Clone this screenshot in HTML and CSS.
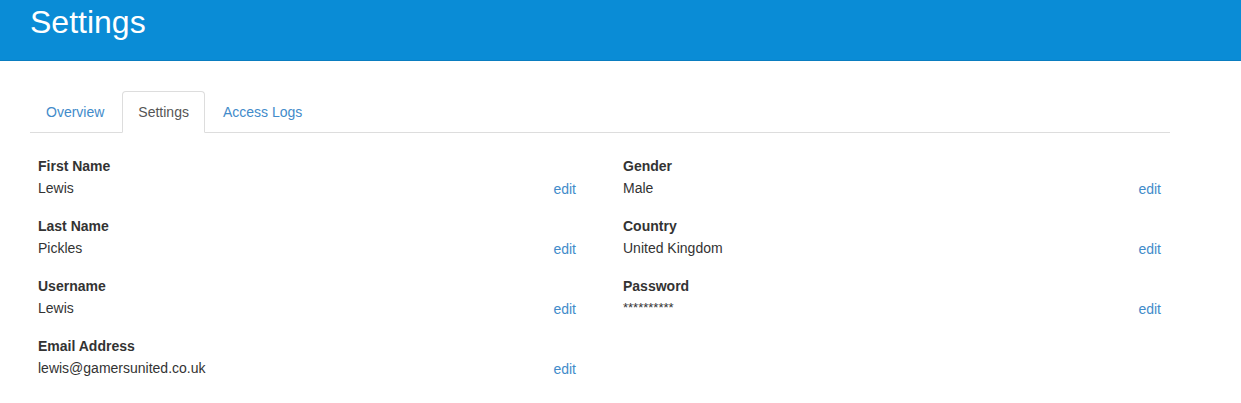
FILE: index.html
```html
<!DOCTYPE html>
<html lang="en">
<head>
    <meta charset="UTF-8">
    <meta name="viewport" content="width=device-width, initial-scale=1.0">
    <title>Settings</title>
    <link rel="stylesheet" href="styles.css">
</head>
<body>
    <header class="page-header">
        <h1>Settings</h1>
    </header>

    <div class="container">
        <ul class="nav-tabs">
            <li><a href="#">Overview</a></li>
            <li class="active"><a href="#">Settings</a></li>
            <li><a href="#">Access Logs</a></li>
        </ul>

        <div class="row">
            <!-- Left column -->
            <div class="col">
                <div class="field">
                    <div class="field-text">
                        <div class="field-label">First Name</div>
                        <div class="field-value">Lewis</div>
                    </div>
                    <a class="edit" href="#">edit</a>
                </div>
                <div class="field">
                    <div class="field-text">
                        <div class="field-label">Last Name</div>
                        <div class="field-value">Pickles</div>
                    </div>
                    <a class="edit" href="#">edit</a>
                </div>
                <div class="field">
                    <div class="field-text">
                        <div class="field-label">Username</div>
                        <div class="field-value">Lewis</div>
                    </div>
                    <a class="edit" href="#">edit</a>
                </div>
                <div class="field">
                    <div class="field-text">
                        <div class="field-label">Email Address</div>
                        <div class="field-value">lewis@gamersunited.co.uk</div>
                    </div>
                    <a class="edit" href="#">edit</a>
                </div>
            </div>

            <!-- Right column -->
            <div class="col">
                <div class="field">
                    <div class="field-text">
                        <div class="field-label">Gender</div>
                        <div class="field-value">Male</div>
                    </div>
                    <a class="edit" href="#">edit</a>
                </div>
                <div class="field">
                    <div class="field-text">
                        <div class="field-label">Country</div>
                        <div class="field-value">United Kingdom</div>
                    </div>
                    <a class="edit" href="#">edit</a>
                </div>
                <div class="field">
                    <div class="field-text">
                        <div class="field-label">Password</div>
                        <div class="field-value password">**********</div>
                    </div>
                    <a class="edit" href="#">edit</a>
                </div>
            </div>
        </div>
    </div>
</body>
</html>
```

FILE: styles.css
```css
/* General Styling */
body {
    margin: 0;
    padding: 0;
    font-family: "Liberation Sans", Arial, sans-serif;
    font-size: 14px;
    line-height: 20px;
    color: #333;
    background: #fff;
}

a {
    color: #428bca;
    text-decoration: none;
}

/* Header */
.page-header {
    height: 60px;
    background: #0a8cd6;
    border-bottom: 1px solid #0a7dc0;
    padding: 0 30px;
}

.page-header h1 {
    margin: 0;
    padding-top: 4px;
    font-size: 32px;
    line-height: 36px;
    font-weight: normal;
    color: #fff;
}

.container {
    width: 1140px;
    padding: 30px 0 0 30px;
}

/* Tabs */
.nav-tabs {
    list-style: none;
    margin: 0;
    padding: 0;
    display: flex;
    border-bottom: 1px solid #ddd;
}

.nav-tabs li {
    margin-bottom: -1px;
}

.nav-tabs li a {
    display: block;
    margin-right: 2px;
    padding: 10px 15px;
    border: 1px solid transparent;
    border-radius: 4px 4px 0 0;
}

.nav-tabs li.active a {
    color: #555;
    background: #fff;
    border-color: #ddd #ddd transparent;
}

/* Fields */
.row {
    display: flex;
    gap: 30px;
    padding-top: 23px;
}

.col {
    flex: 1;
}

.field {
    display: flex;
    align-items: flex-end;
    padding: 0 9px 0 8px;
    margin-bottom: 18px;
}

.field-text {
    flex: 1;
}

.field-label {
    font-weight: bold;
}

.field-value {
    margin-top: 2px;
}

.field-value.password {
    font-size: 13px;
}

.edit {
    position: relative;
    top: 1px;
}
```
